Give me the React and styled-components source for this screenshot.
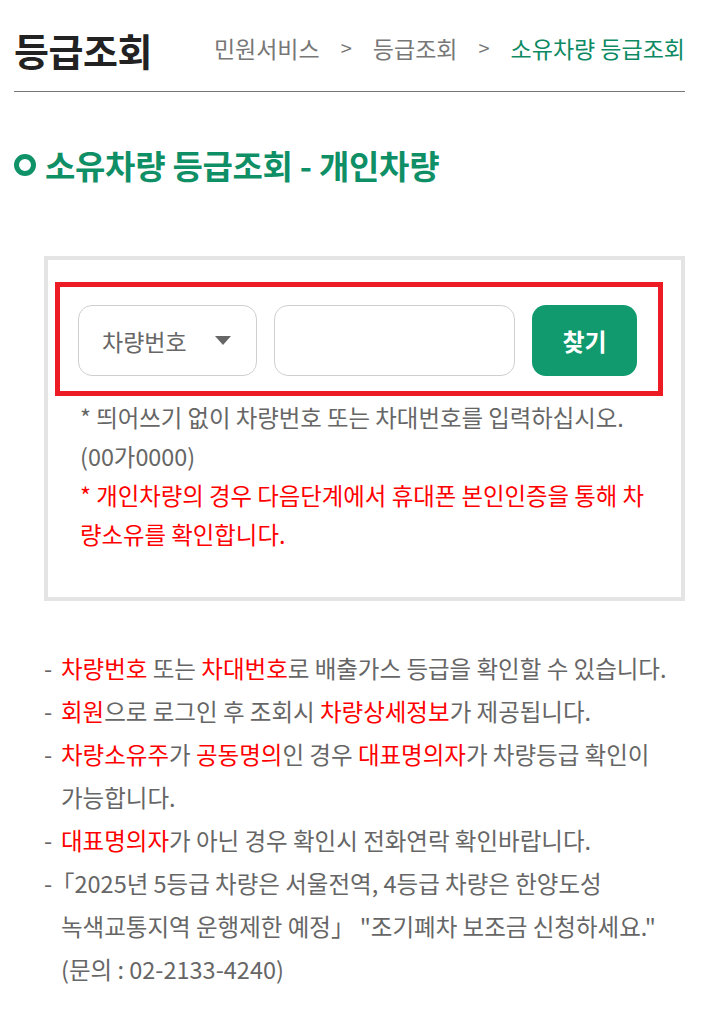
import React from "react";
import styled, { createGlobalStyle } from "styled-components";

const GlobalStyle = createGlobalStyle`
  html, body { margin: 0; padding: 0; background: #fff; }
  body {
    font-family: "Noto Sans CJK KR", "Noto Sans", sans-serif;
    color: #666;
  }
  * { box-sizing: border-box; }
`;

const Page = styled.div`
  padding: 0 23px 40px 14px;
  width: 708px;
`;

const Header = styled.header`
  display: flex;
  align-items: center;
  justify-content: space-between;
  padding: 26px 0 17px;
  border-bottom: 1px solid #777;
`;

const PageTitle = styled.h1`
  margin: 0;
  font-size: 38px;
  line-height: 48px;
  font-weight: 700;
  letter-spacing: -0.5px;
  color: #222;
`;

const Breadcrumb = styled.nav`
  display: flex;
  align-items: center;
  font-size: 23px;
  line-height: 30px;
  color: #777;
  margin-top: -4px;
`;

const Crumb = styled.span`
  color: ${(p) => (p.$current ? "#0d8a63" : "#777")};
`;

const Sep = styled.span`
  margin: 0 21px;
  font-size: 20px;
`;

const SectionTitle = styled.h2`
  display: flex;
  align-items: center;
  gap: 9px;
  margin: 53px 0 0;
  font-size: 33px;
  line-height: 40px;
  font-weight: 700;
  letter-spacing: -0.3px;
  color: #0f8f66;
`;

const Ring = styled.span`
  display: inline-block;
  width: 22px;
  height: 22px;
  border: 5px solid #0f9268;
  border-radius: 50%;
  flex: none;
`;

const SearchBox = styled.section`
  margin: 71px 0 0 30px;
  border: 4px solid #e4e4e4;
  padding: 22px 18px 43px 7px;
`;

const Highlight = styled.div`
  border: 5px solid #ed1c24;
  padding: 18px 21px 15px 18px;
`;

const FormRow = styled.div`
  display: flex;
  gap: 17px;
  height: 71px;
`;

const Select = styled.div`
  width: 179px;
  display: flex;
  align-items: center;
  justify-content: space-between;
  padding: 0 25px 0 23px;
  border: 1px solid #cfcfcf;
  border-radius: 14px;
  font-size: 23px;
  color: #666;
`;

const Caret = styled.span`
  width: 0;
  height: 0;
  border-left: 8px solid transparent;
  border-right: 8px solid transparent;
  border-top: 9px solid #666;
`;

const Input = styled.input`
  width: 241px;
  border: 1px solid #cfcfcf;
  border-radius: 14px;
  font: inherit;
  outline: none;
  background: #fff;
`;

const Button = styled.button`
  width: 105px;
  border: none;
  border-radius: 14px;
  background: #119a6e;
  color: #fff;
  font-family: inherit;
  font-size: 24px;
  font-weight: 700;
  cursor: pointer;
`;

const Notes = styled.p`
  margin: ${(p) => (p.$red ? "0" : "2px")} 0 0 25px;
  font-size: 23.4px;
  line-height: 39px;
  white-space: nowrap;
  color: ${(p) => (p.$red ? "#f00" : "#666")};
`;

const InfoList = styled.ul`
  list-style: none;
  margin: 46px 0 0;
  padding: 0 0 0 30px;
  font-size: 23.5px;
  line-height: 43px;
  color: #666;
  word-break: keep-all;
`;

const Item = styled.li`
  display: flex;
`;

const Dash = styled.span`
  flex: none;
  width: 17px;
`;

const ItemText = styled.p`
  flex: 1;
  margin: 0;
  text-indent: ${(p) => p.$indent || 0};
`;

const Em = styled.span`
  color: #f00;
`;

export default function App() {
  return (
    <>
      <GlobalStyle />
      <Page>
        <Header>
          <PageTitle>등급조회</PageTitle>
          <Breadcrumb>
            <Crumb>민원서비스</Crumb>
            <Sep>&gt;</Sep>
            <Crumb>등급조회</Crumb>
            <Sep>&gt;</Sep>
            <Crumb $current>소유차량 등급조회</Crumb>
          </Breadcrumb>
        </Header>

        <SectionTitle>
          <Ring />
          소유차량 등급조회 - 개인차량
        </SectionTitle>

        <SearchBox>
          <Highlight>
            <FormRow>
              <Select>
                차량번호
                <Caret />
              </Select>
              <Input type="text" aria-label="차량번호" />
              <Button type="button">찾기</Button>
            </FormRow>
          </Highlight>
          <Notes>
            * 띄어쓰기 없이 차량번호 또는 차대번호를 입력하십시오.
            <br />
            (00가0000)
          </Notes>
          <Notes $red>
            * 개인차량의 경우 다음단계에서 휴대폰 본인인증을 통해 차
            <br />
            량소유를 확인합니다.
          </Notes>
        </SearchBox>

        <InfoList>
          <Item>
            <Dash>-</Dash>
            <ItemText>
              <Em>차량번호</Em> 또는 <Em>차대번호</Em>로 배출가스 등급을 확인할 수 있습니다.
            </ItemText>
          </Item>
          <Item>
            <Dash>-</Dash>
            <ItemText>
              <Em>회원</Em>으로 로그인 후 조회시 <Em>차량상세정보</Em>가 제공됩니다.
            </ItemText>
          </Item>
          <Item>
            <Dash>-</Dash>
            <ItemText>
              <Em>차량소유주</Em>가 <Em>공동명의</Em>인 경우 <Em>대표명의자</Em>가 차량등급 확인이
              <br />
              가능합니다.
            </ItemText>
          </Item>
          <Item>
            <Dash>-</Dash>
            <ItemText>
              <Em>대표명의자</Em>가 아닌 경우 확인시 전화연락 확인바랍니다.
            </ItemText>
          </Item>
          <Item>
            <Dash>-</Dash>
            <ItemText $indent="-10px">
              「2025년 5등급 차량은 서울전역, 4등급 차량은 한양도성
              <br />
              녹색교통지역 운행제한 예정」 "조기폐차 보조금 신청하세요."
              <br />
              (문의 : 02-2133-4240)
            </ItemText>
          </Item>
        </InfoList>
      </Page>
    </>
  );
}
